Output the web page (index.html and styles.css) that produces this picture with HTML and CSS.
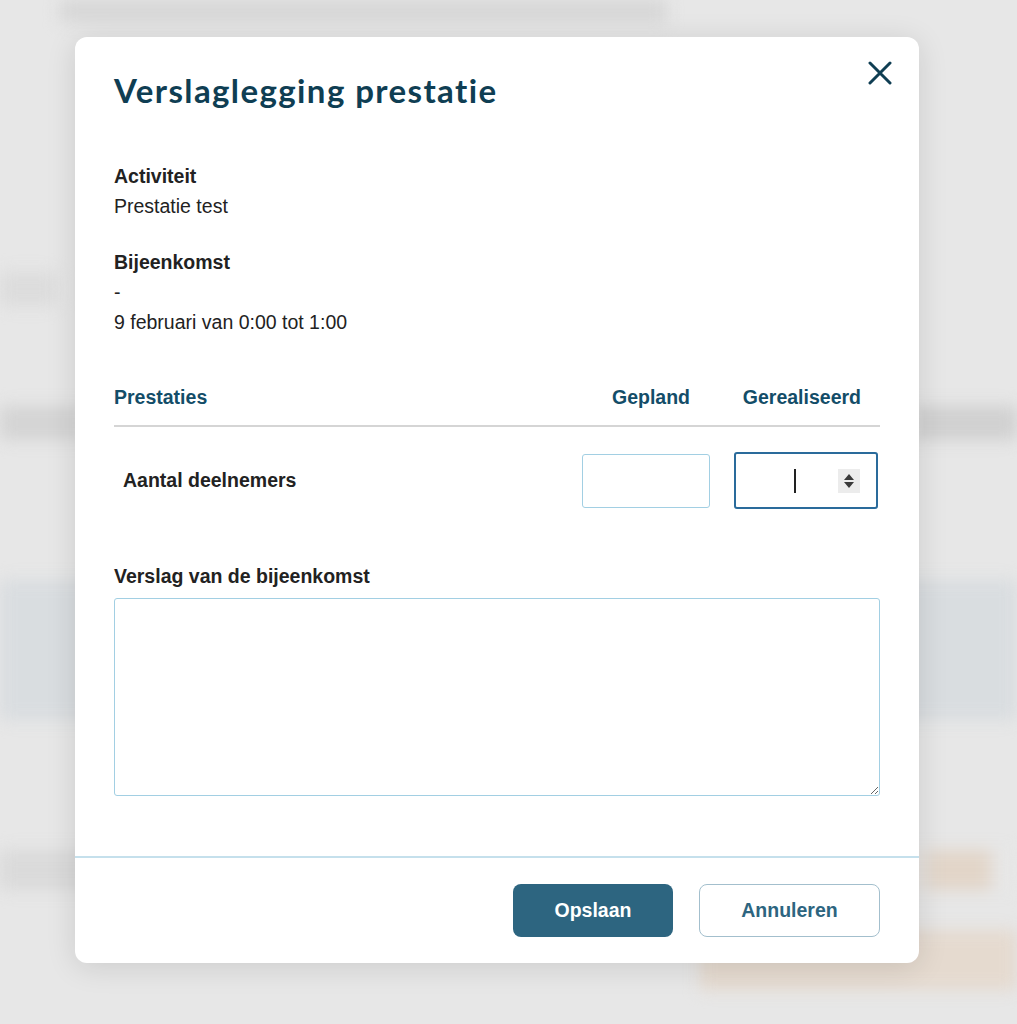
FILE: index.html
```html
<!DOCTYPE html>
<html lang="nl">
<head>
  <meta charset="UTF-8">
  <meta name="viewport" content="width=device-width, initial-scale=1.0">
  <title>Verslaglegging prestatie</title>
  <link rel="stylesheet" href="styles.css">
</head>
<body>
  <div class="backdrop">
    <div class="bg-top"></div>
    <div class="bg-row bg-row-a"></div>
    <div class="bg-row bg-row-b"></div>
    <div class="bg-band"></div>
    <div class="bg-row bg-row-c"></div>
    <div class="bg-foot"></div>
  </div>

  <div class="modal">
    <div class="modal-body">
      <div class="modal-head">
        <h1>Verslaglegging prestatie</h1>
        <button class="close" aria-label="Sluiten">
          <svg width="24" height="24" viewBox="0 0 24 24">
            <path d="M2 2 L22 22 M22 2 L2 22" stroke="#0f3e53" stroke-width="3" stroke-linecap="round" fill="none"/>
          </svg>
        </button>
      </div>

      <div class="info">
        <div class="info-label">Activiteit</div>
        <div>Prestatie test</div>
      </div>

      <div class="info">
        <div class="info-label">Bijeenkomst</div>
        <div>-</div>
        <div>9 februari van 0:00 tot 1:00</div>
      </div>

      <div class="perf-head">
        <span class="perf-name">Prestaties</span>
        <span class="perf-col plan">Gepland</span>
        <span class="perf-col real">Gerealiseerd</span>
      </div>
      <div class="perf-row">
        <span class="perf-name">Aantal deelnemers</span>
        <div class="field field-plan"></div>
        <div class="field field-real">
          <span class="caret"></span>
          <span class="spinner">
            <svg width="12" height="16" viewBox="0 0 12 16">
              <path d="M1 7 L6 1 L11 7 Z M1 9 L11 9 L6 15 Z" fill="#3a3a3a"/>
            </svg>
          </span>
        </div>
      </div>

      <label class="report-label" for="report">Verslag van de bijeenkomst</label>
      <textarea id="report" class="report"></textarea>
    </div>

    <div class="modal-foot">
      <button class="btn btn-primary">Opslaan</button>
      <button class="btn btn-secondary">Annuleren</button>
    </div>
  </div>
</body>
</html>
```

FILE: styles.css
```css
html, body {
  margin: 0;
  padding: 0;
}
body {
  width: 1017px;
  height: 1024px;
  overflow: hidden;
  background: #e7e7e7;
  font-family: "Liberation Sans", Arial, sans-serif;
  color: #222;
}
.backdrop {
  display: flex;
  flex-direction: column;
  height: 1024px;
  filter: blur(8px);
}
.bg-top {
  height: 22px;
  margin: 0 350px 0 60px;
  background: #d6d6d6;
}
.bg-row {
  height: 34px;
  background: #dcdcdc;
}
.bg-row-a {
  margin: 250px 960px 0 0;
}
.bg-row-b {
  margin: 100px 0 0 0;
  background: linear-gradient(90deg, #d4d4d4 0, #d4d4d4 8%, #e7e7e7 8%, #e7e7e7 90%, #d0d0d0 90%);
}
.bg-band {
  height: 140px;
  margin-top: 140px;
  background: #d9dde0;
}
.bg-row-c {
  margin-top: 130px;
  height: 40px;
  background: linear-gradient(90deg, #dadada 0, #dadada 30%, #e7e7e7 30%, #e7e7e7 90%, #e2d5c8 92%, #e2d5c8 97%, #e7e7e7 98%);
}
.bg-foot {
  margin: 40px 0 0 700px;
  height: 60px;
  background: #e5dacf;
}

.modal {
  position: absolute;
  left: 75px;
  top: 37px;
  width: 844px;
  height: 926px;
  background: #fff;
  border-radius: 12px;
  box-shadow: 0 4px 30px rgba(0, 0, 0, 0.12);
  display: flex;
  flex-direction: column;
}
.modal-body {
  flex: 1;
  padding: 33px 39px 0 39px;
  display: flex;
  flex-direction: column;
}
.modal-head {
  display: flex;
  justify-content: space-between;
  align-items: flex-start;
  height: 91px;
}
h1 {
  margin: 0;
  font-family: Lato, "Open Sans", sans-serif;
  font-size: 33px;
  font-weight: 700;
  letter-spacing: 1.4px;
  color: #0f3e53;
  line-height: 40px;
}
.close {
  background: none;
  border: none;
  padding: 0;
  margin: -9px -12px 0 0;
  width: 24px;
  height: 24px;
  cursor: pointer;
}
.info {
  font-size: 19.5px;
  line-height: 30px;
  margin-bottom: 26px;
}
.info-label {
  font-weight: 700;
}
.perf-head {
  display: flex;
  align-items: center;
  height: 40px;
  margin-top: 14px;
  border-bottom: 2px solid #d5d5d5;
  padding-bottom: 8px;
  color: #134d68;
  font-weight: 700;
  font-size: 19.5px;
}
.perf-name {
  flex: 1;
}
.perf-col {
  box-sizing: border-box;
  text-align: right;
}
.perf-col.plan {
  width: 128px;
  padding-right: 20px;
  margin-right: 24px;
}
.perf-col.real {
  width: 144px;
  padding-right: 17px;
  margin-right: 2px;
}
.perf-row {
  display: flex;
  align-items: center;
  margin-top: 25px;
  font-size: 19.5px;
  font-weight: 700;
}
.perf-row .perf-name {
  padding-left: 9px;
}
.field {
  box-sizing: border-box;
  background: #fff;
  border-radius: 3px;
}
.field-plan {
  width: 128px;
  height: 54px;
  border: 1.5px solid #a2cfe3;
  margin-right: 24px;
}
.field-real {
  width: 144px;
  height: 57px;
  border: 2px solid #2a6b9b;
  margin-right: 2px;
  display: flex;
  align-items: center;
  justify-content: flex-end;
  padding-right: 16px;
}
.caret {
  width: 2px;
  height: 24px;
  background: #222;
  margin-right: 42px;
}
.spinner {
  width: 22px;
  height: 24px;
  background: #ececec;
  display: flex;
  align-items: center;
  justify-content: center;
}
.report-label {
  margin-top: 55px;
  font-size: 19.5px;
  font-weight: 700;
  line-height: 24px;
}
.report {
  margin-top: 10px;
  height: 198px;
  box-sizing: border-box;
  border: 1.5px solid #a2cfe3;
  border-radius: 3px;
  font-family: inherit;
  font-size: 16px;
  resize: vertical;
}
.modal-foot {
  border-top: 2px solid #c5e0ec;
  height: 107px;
  box-sizing: border-box;
  display: flex;
  justify-content: flex-end;
  align-items: flex-start;
  padding: 26px 39px 0 0;
  gap: 26px;
}
.btn {
  height: 53px;
  border-radius: 8px;
  font-family: "Liberation Sans", Arial, sans-serif;
  font-size: 19.5px;
  font-weight: 700;
  cursor: pointer;
}
.btn-primary {
  width: 160px;
  background: #2d6580;
  color: #fff;
  border: none;
}
.btn-secondary {
  width: 181px;
  background: #fff;
  color: #2d6580;
  border: 1.5px solid #a3bfcd;
}
```
